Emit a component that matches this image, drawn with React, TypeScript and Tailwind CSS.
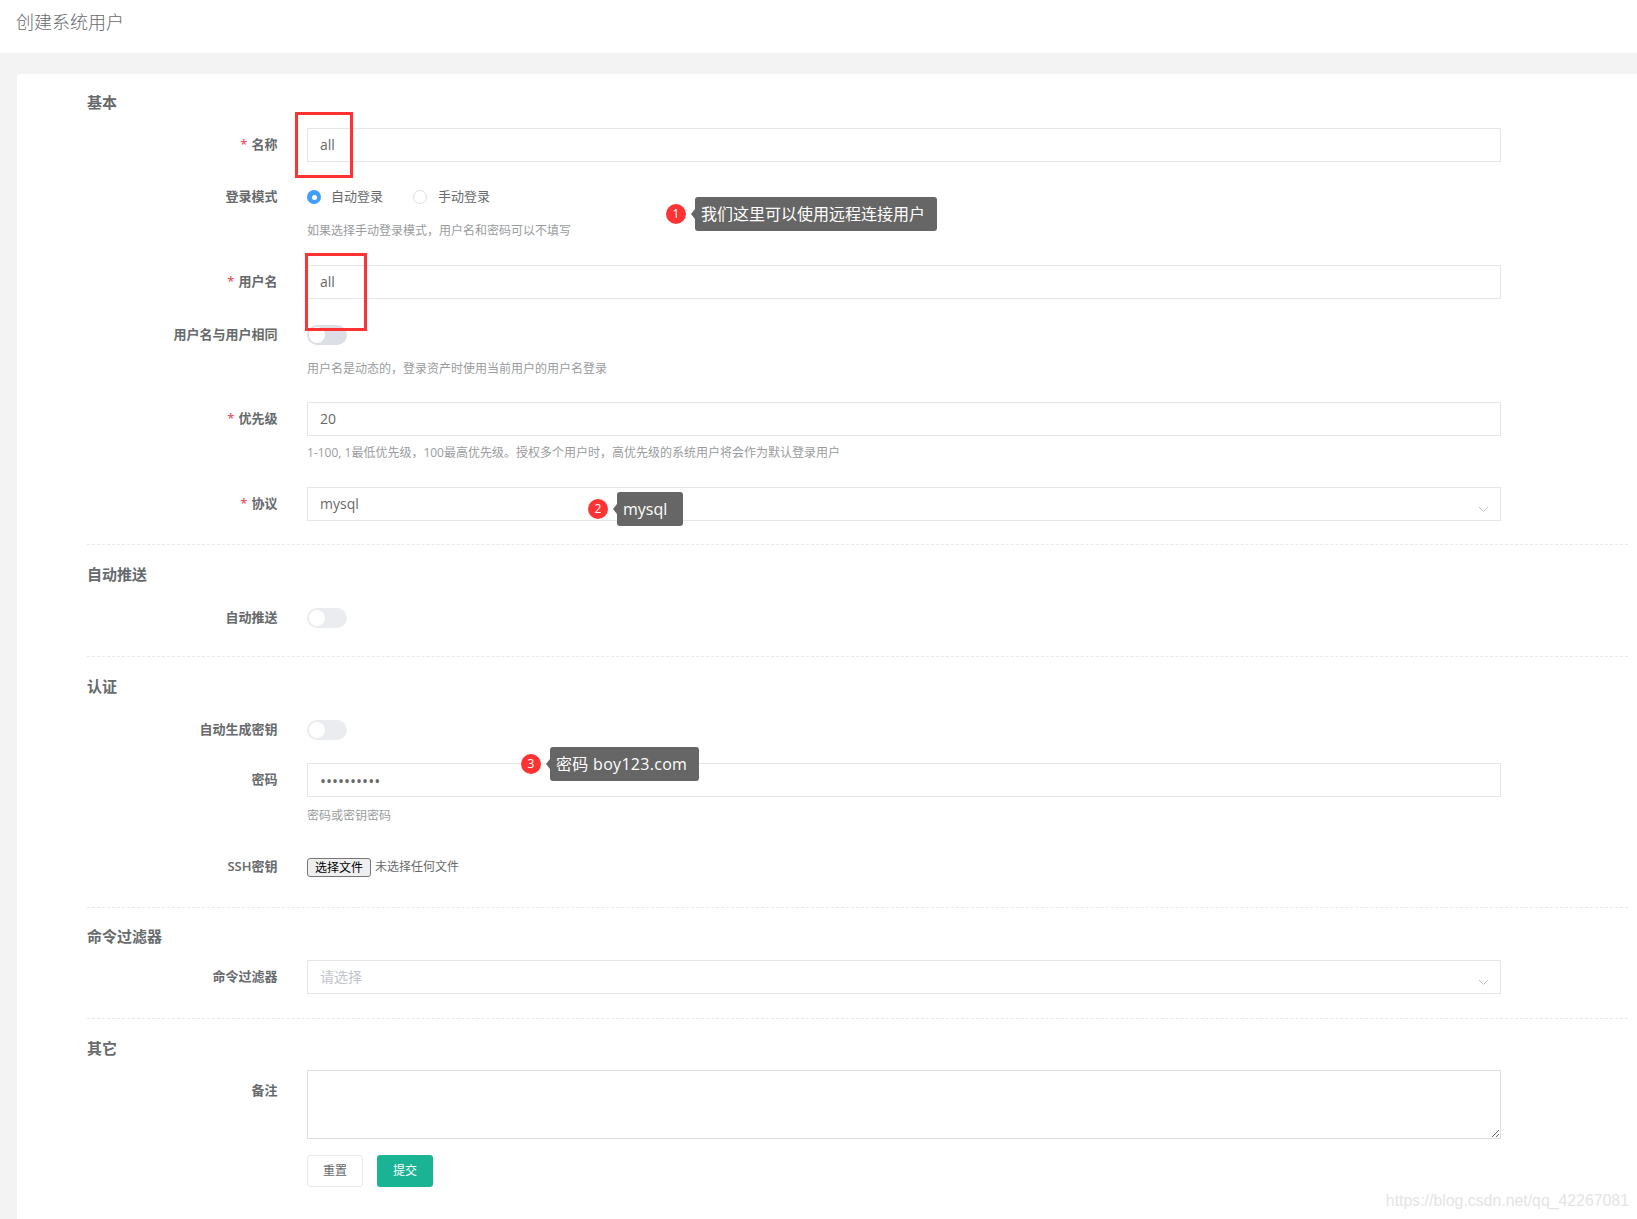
import React from 'react';

const FONT = 'font-["Open_Sans","Noto_Sans_CJK_SC",sans-serif]';

const Row = ({ label, required, children, className = '', labelClass = '' }: { label: string; required?: boolean; children: React.ReactNode; className?: string; labelClass?: string }) => (
  <div className={`flex pr-[127px] ${className}`}>
    <label className={`w-[190.5px] mr-[29.5px] shrink-0 text-right text-[13px] font-semibold leading-[33px] text-[#676a6c] ${labelClass}`}>
      {required && <span className="text-[#ed5565] mr-1">*</span>}
      {label}
    </label>
    <div className="flex-1 min-w-0">{children}</div>
  </div>
);

const TextBox = ({ value }: { value: string }) => (
  <div className="h-[34px] border border-[#e5e6e7] bg-white px-3 text-[14px] leading-[32px] text-[#676a6c]">{value}</div>
);

const SelectBox = ({ value, placeholder }: { value?: string; placeholder?: string }) => (
  <div className="relative h-[34px] border border-[#e5e6e7] bg-white px-3 text-[14px] leading-[32px] text-[#676a6c]">
    {value}
    {placeholder && <span className="text-[#c0c4cc]">{placeholder}</span>}
    <svg className="absolute right-[11px] top-[18px]" width="11" height="7" viewBox="0 0 11 7" fill="none">
      <path d="M1 1l4.5 4.5L10 1" stroke="#c0c4cc" strokeWidth="1" />
    </svg>
  </div>
);

const Help = ({ text, className = '' }: { text: string; className?: string }) => (
  <p className={`text-[12px] leading-[16px] text-[#999c9e] ${className}`}>{text}</p>
);

const Toggle = ({ dark }: { dark?: boolean }) => (
  <div className="flex h-[34px] items-center">
    <span className={`flex h-[20px] w-[40px] items-center rounded-full px-[2px] ${dark ? 'bg-[#dcdfe6]' : 'bg-[#eaecf0]'}`}>
      <span className="h-[16px] w-[16px] rounded-full bg-white" />
    </span>
  </div>
);

const Title = ({ text, className = '' }: { text: string; className?: string }) => (
  <h3 className={`text-[15px] font-semibold leading-[20px] text-[#676a6c] ${className}`}>{text}</h3>
);

const Divider = ({ className = '' }: { className?: string }) => (
  <div className={`border-t border-dashed border-[#e7eaec] ${className}`} />
);

const Note = ({ n, text, className, boxClass }: { n: number; text: string; className: string; boxClass: string }) => (
  <div className={`absolute flex items-center ${className}`}>
    <span className="flex h-[20px] w-[20px] items-center justify-center rounded-full bg-[#ff3333] text-[12px] text-white">{n}</span>
    <span className="ml-[5px] h-0 w-0 border-y-[5px] border-r-[4px] border-y-transparent border-r-[#666666]" />
    <span className={`flex h-[34px] items-center rounded-[3px] bg-[#666666] pl-[6px] text-[16px] whitespace-nowrap text-white ${boxClass}`}>{text}</span>
  </div>
);

export default function App() {
  return (
    <div className={`relative min-h-[1219px] overflow-hidden bg-[#f3f3f4] ${FONT}`}>
      <header className="h-[53px] bg-white pl-4 pt-[9px] text-[18px] leading-[26px] font-light text-[#676a6c]">创建系统用户</header>

      <main className="ml-[17px] mt-[21px] min-h-[1145px] rounded-tl-[3px] bg-white pl-[70px] pr-[9px] pt-[18px]">
        <Title text="基本" />
        <Row label="名称" required className="mt-[16px]"><TextBox value="all" /></Row>
        <Row label="登录模式" className="mt-[18px]">
          <div className="flex h-[34px] items-center text-[13px] text-[#676a6c]">
            <span className="flex h-[14px] w-[14px] items-center justify-center rounded-full bg-[#409eff]">
              <span className="h-[5px] w-[5px] rounded-full bg-white" />
            </span>
            <span className="ml-[10px]">自动登录</span>
            <span className="ml-[30px] h-[14px] w-[14px] rounded-full border border-[#dcdfe6] bg-white" />
            <span className="ml-[11px]">手动登录</span>
          </div>
          <Help text="如果选择手动登录模式，用户名和密码可以不填写" className="mt-[9px]" />
        </Row>
        <Row label="用户名" required className="mt-[26px]"><TextBox value="all" /></Row>
        <Row label="用户名与用户相同" className="mt-[19px]">
          <Toggle dark />
          <Help text="用户名是动态的，登录资产时使用当前用户的用户名登录" className="mt-[9px]" />
        </Row>
        <Row label="优先级" required className="mt-[25px]">
          <TextBox value="20" />
          <Help text="1-100, 1最低优先级，100最高优先级。授权多个用户时，高优先级的系统用户将会作为默认登录用户" className="mt-[9px]" />
        </Row>
        <Row label="协议" required className="mt-[26px]"><SelectBox value="mysql" /></Row>
        <Divider className="mt-[23px]" />

        <Title text="自动推送" className="mt-[19px]" />
        <Row label="自动推送" className="mt-[17px]"><Toggle /></Row>
        <Divider className="mt-[21px]" />

        <Title text="认证" className="mt-[19px]" />
        <Row label="自动生成密钥" className="mt-[17px]"><Toggle /></Row>
        <Row label="密码" className="mt-[16px]">
          <input
            type="password"
            readOnly
            value="boy123.com"
            className="block h-[34px] w-full border border-[#e5e6e7] bg-white px-3 pt-[2px] text-[16px] text-[#676a6c] outline-none"
          />
          <Help text="密码或密钥密码" className="mt-[11px]" />
        </Row>
        <Row label="SSH密钥" className="mt-[26px]">
          <div className="flex h-[34px] items-center text-[12px] text-[#676a6c]">
            <button type="button" className="h-[19px] w-[64px] rounded-[3px] border border-[#767676] bg-[#efefef] text-[12px] leading-[17px] text-black">选择文件</button>
            <span className="ml-[4px]">未选择任何文件</span>
          </div>
        </Row>
        <Divider className="mt-[23px]" />

        <Title text="命令过滤器" className="mt-[18px]" />
        <Row label="命令过滤器" className="mt-[14px]"><SelectBox placeholder="请选择" /></Row>
        <Divider className="mt-[24px]" />

        <Title text="其它" className="mt-[19px]" />
        <Row label="备注" className="mt-[12px]" labelClass="pt-[4px]">
          <textarea readOnly className="block h-[69px] w-full border border-[#dddde5] bg-white outline-none" />
          <div className="mt-[16px] flex gap-[14px]">
            <button type="button" className="h-[32px] w-[56px] rounded-[3px] border border-[#e7eaec] bg-white text-[12px] text-[#676a6c]">重置</button>
            <button type="button" className="h-[32px] w-[56px] rounded-[3px] bg-[#1ab394] text-[12px] text-white">提交</button>
          </div>
        </Row>
      </main>

      {/* annotations drawn over the screenshot */}
      <div className="absolute left-[295px] top-[112px] h-[66px] w-[58px] border-[3px] border-[#ff3333]" />
      <div className="absolute left-[305px] top-[253px] h-[78px] w-[62px] border-[3px] border-[#ff3333]" />
      <Note n={1} text="我们这里可以使用远程连接用户" className="left-[666px] top-[197px]" boxClass="w-[242px]" />
      <Note n={2} text="mysql" className="left-[588px] top-[492px]" boxClass="w-[66px]" />
      <Note n={3} text="密码 boy123.com" className="left-[521px] top-[747px]" boxClass="w-[149px] tracking-[0.3px]" />

      <div className='absolute right-[8px] top-[1191px] font-["Liberation_Sans",sans-serif] text-[15.85px] leading-[20px] text-[#e4e4e4]'>https://blog.csdn.net/qq_42267081</div>
    </div>
  );
}
